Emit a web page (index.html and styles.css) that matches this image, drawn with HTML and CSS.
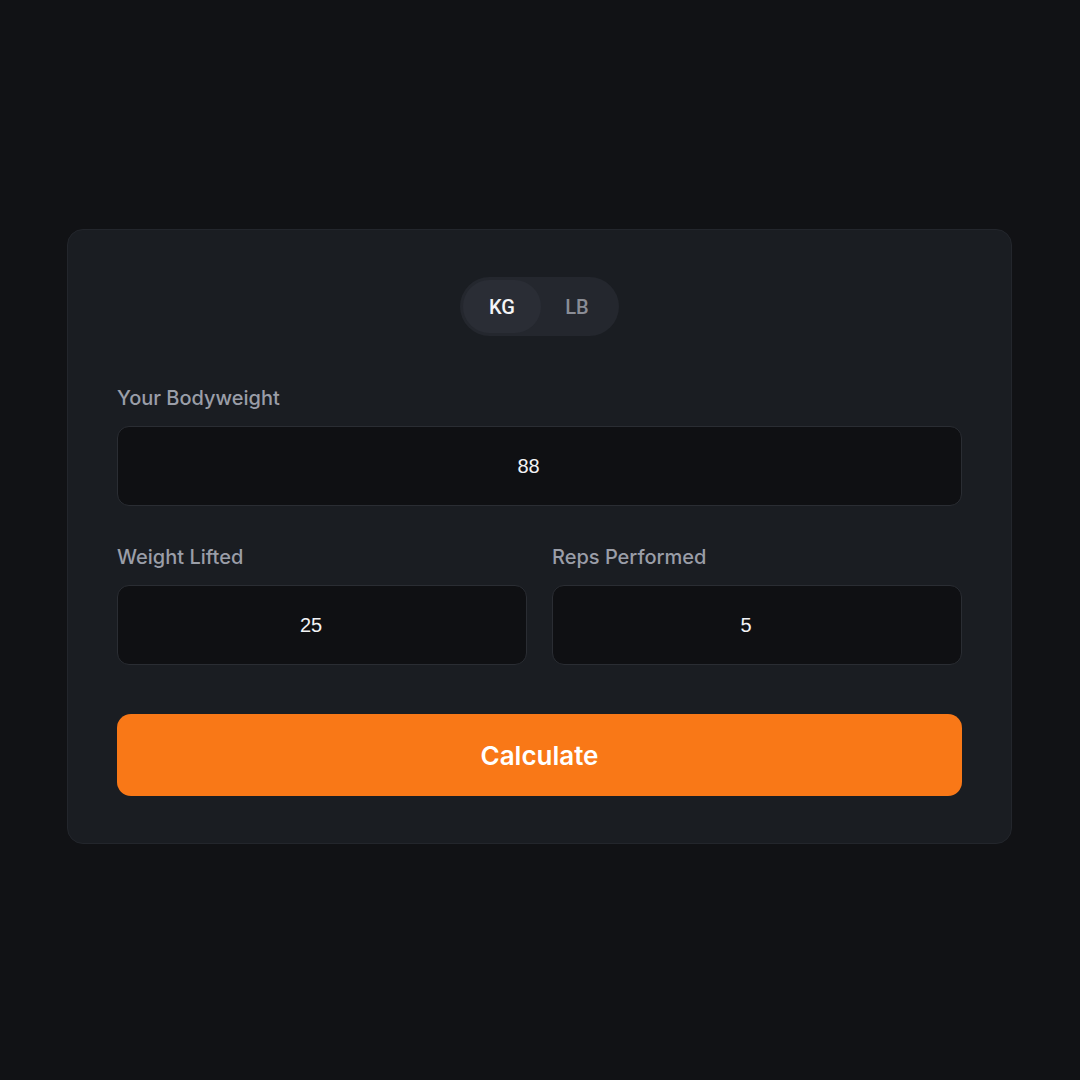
FILE: index.html
```html
<!DOCTYPE html>
<html>
<head>
<meta charset="utf-8">
<link rel="stylesheet" href="styles.css">
</head>
<body>
<div class="card">
  <div class="toggle-wrap">
    <div class="toggle">
      <span class="seg active">KG</span>
      <span class="seg">LB</span>
    </div>
  </div>
  <div class="field">
    <label class="label">Your Bodyweight</label>
    <div class="input">88</div>
  </div>
  <div class="row">
    <div class="field">
      <label class="label">Weight Lifted</label>
      <div class="input">25</div>
    </div>
    <div class="field">
      <label class="label">Reps Performed</label>
      <div class="input">5</div>
    </div>
  </div>
  <button class="btn">Calculate</button>
</div>
</body>
</html>
```
FILE: styles.css
```css
html, body {
  margin: 0;
  padding: 0;
  background: #111215;
  height: 1080px;
}
body {
  display: flex;
  flex-direction: column;
  align-items: flex-start;
  padding: 229px 0 0 67px;
  box-sizing: border-box;
  font-family: Inter, "Noto Sans", sans-serif;
}
.card {
  width: 945px;
  box-sizing: border-box;
  background: #1a1d22;
  border: 1px solid #23262c;
  border-radius: 16px;
  padding: 47px 49px 47px 49px;
  display: flex;
  flex-direction: column;
}
.toggle-wrap {
  display: flex;
  justify-content: center;
  margin-bottom: 50px;
}
.toggle {
  display: flex;
  height: 59px;
  border-radius: 30px;
  background: #24272e;
  padding: 3px;
  box-sizing: border-box;
}
.seg {
  width: 76px;
  display: flex;
  align-items: center;
  justify-content: center;
  font-family: Roboto, "Liberation Sans", Arial, sans-serif;
  font-size: 20px;
  font-weight: 500;
  color: #8a8d96;
  border-radius: 27px;
}
.seg:first-child { width: 78px; margin-right: -3px; }
.seg:last-child { width: 78px; }
.seg.active {
  background: #2a2d35;
  color: #f4f5f7;
}
.field {
  display: flex;
  flex-direction: column;
}
.label {
  font-size: 20px;
  font-weight: 500;
  line-height: 24px;
  color: #9a9ea8;
  margin-bottom: 16px;
}
.input {
  height: 80px;
  box-sizing: border-box;
  background: #0f1013;
  border: 1px solid #2a2d33;
  border-radius: 12px;
  display: flex;
  align-items: center;
  justify-content: center;
  padding-right: 22px;
  font-family: "Liberation Sans", Arial, sans-serif;
  font-size: 20px;
  color: #f2f3f5;
}
.row {
  display: grid;
  grid-template-columns: 410px 410px;
  column-gap: 25px;
  margin-top: 39px;
}
.btn {
  margin-top: 49px;
  height: 82px;
  border: none;
  border-radius: 14px;
  background: #f97817;
  color: #ffffff;
  font-family: Inter, "Noto Sans", sans-serif;
  font-size: 26px;
  font-weight: 600;
}
```
